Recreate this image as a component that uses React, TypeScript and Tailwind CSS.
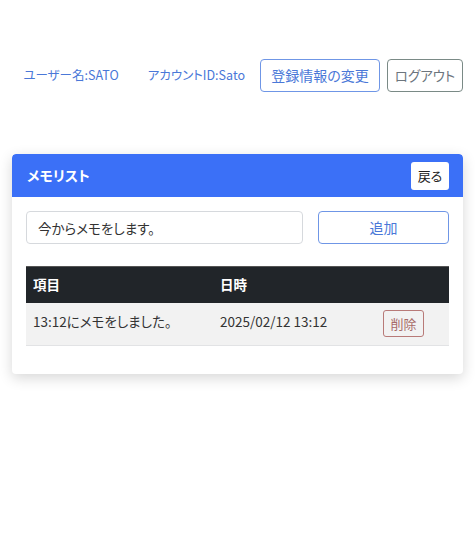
import React from "react";

const font = { fontFamily: '"Noto Sans CJK JP", "Noto Sans", sans-serif' };

export default function App() {
  return (
    <div
      className="min-h-[540px] w-[475px] bg-white text-[13.5px] text-[#333] [font-feature-settings:'palt'] px-3"
      style={font}
    >
      <div className="flex items-center justify-end pt-[59px] h-[92px] whitespace-nowrap">
        <span className="shrink-0 text-[#4a78d8] mr-[29px] leading-none text-[12.5px]">ユーザー名:SATO</span>
        <span className="shrink-0 text-[#4a78d8] mr-[15px] leading-none text-[12.5px]">アカウントID:Sato</span>
        <button className="shrink-0 h-[33px] w-[120px] rounded-[4px] border border-[#6f96e6] text-[#4a78d8] mr-[7px] text-[14px]">
          登録情報の変更
        </button>
        <button className="shrink-0 h-[33px] w-[76px] rounded-[4px] border border-[#7a8a86] text-[#6c757d] text-[13.5px]">
          ログアウト
        </button>
      </div>

      <div className="mt-[62px] rounded-[4px] bg-white shadow-[0_4px_14px_rgba(0,0,0,0.16)] overflow-hidden">
        <div className="flex items-center justify-between h-[43px] bg-[#3b70f7] pl-[15px] pr-[14px] rounded-t-[4px]">
          <span className="text-white font-bold text-[14px]">メモリスト</span>
          <button className="h-[28px] w-[38px] rounded-[3px] bg-white text-[#222] text-[13px]">戻る</button>
        </div>
        <div className="px-[14px] pt-[14px] pb-[28px]">
          <div className="flex gap-[15px]">
            <input
              className="h-[33px] w-[277px] rounded-[4px] border border-[#d6d9dd] px-[11px] text-[13.5px] text-[#333] outline-none"
              defaultValue="今からメモをします。"
              style={font}
            />
            <button className="h-[33px] flex-1 rounded-[4px] border border-[#6f96e6] text-[#4a78d8] text-[14px]">
              追加
            </button>
          </div>
          <table className="mt-[22px] w-full border-collapse">
            <thead>
              <tr className="h-[36px] bg-[#212529] text-white font-bold border-t border-[#555]">
                <th className="w-[187px] text-left pl-[7px] pb-[2px] font-bold">項目</th>
                <th className="w-[163px] text-left pl-[7px] pb-[2px] font-bold">日時</th>
                <th></th>
              </tr>
            </thead>
            <tbody>
              <tr className="h-[43px] bg-[#f2f2f2] border-b border-[#e2e3e5]">
                <td className="pl-[7px] pb-[6px]">13:12にメモをしました。</td>
                <td className="pl-[7px] pb-[6px]">2025/02/12 13:12</td>
                <td className="pl-[7px]">
                  <button className="h-[27px] w-[41px] rounded-[3px] border border-[#b87a78] text-[#a86a68] text-[13px]">
                    削除
                  </button>
                </td>
              </tr>
            </tbody>
          </table>
        </div>
      </div>
    </div>
  );
}
